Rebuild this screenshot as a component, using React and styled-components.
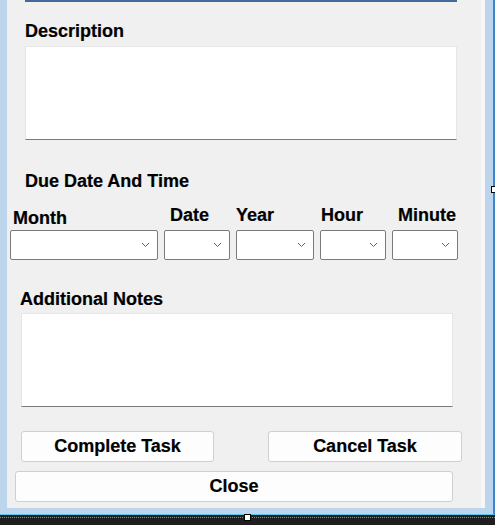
import React from "react";
import styled, { createGlobalStyle } from "styled-components";

const GlobalStyle = createGlobalStyle`
  html, body {
    margin: 0;
    padding: 0;
    background: #1e1e1e;
    font-family: "Liberation Sans", Arial, sans-serif;
  }
`;

const Window = styled.div`
  width: 495px;
  height: 515px;
  box-sizing: border-box;
  background: #bcd4ec;
  padding: 0 8px 6px 7px;
  border-right: 2px solid #3b86cf;
  border-bottom: 1px solid #5cc6ea;
  display: flex;
  position: relative;
`;

const Client = styled.div`
  flex: 1;
  background: #f0f0f0;
  border-right: 4px solid #f6f6f6;
  display: flex;
  flex-direction: column;
`;

const TopLine = styled.div`
  margin-left: 18px;
  width: 432px;
  height: 2px;
  background: #41699a;
`;

const Label = styled.div`
  font-size: 18px;
  line-height: 20px;
  font-weight: bold;
  color: #000;
  margin-left: ${(p) => p.$left || 0}px;
  margin-top: ${(p) => p.$top || 0}px;
  white-space: nowrap;
  -webkit-text-stroke: 0.2px #000;
`;

const TextBox = styled.div`
  margin-left: ${(p) => p.$left}px;
  margin-top: ${(p) => p.$top}px;
  width: 432px;
  height: 94px;
  box-sizing: border-box;
  background: #fff;
  border: 1px solid #e6e6e6;
  border-bottom: 1px solid #7a7a7a;
`;

const DateRow = styled.div`
  display: flex;
  gap: 6px;
  margin-left: 3px;
  margin-top: 14px;
`;

const Field = styled.div`
  display: flex;
  flex-direction: column;
  width: ${(p) => p.$width}px;
`;

const FieldLabel = styled(Label)`
  height: 25px;
  padding-top: ${(p) => p.$drop || 0}px;
  box-sizing: border-box;
`;

const Combo = styled.div`
  height: 30px;
  box-sizing: border-box;
  background: #fff;
  border: 1px solid #7a7a7a;
  border-radius: 2px;
  display: flex;
  align-items: center;
  justify-content: flex-end;
  padding-right: 7px;
`;

const ButtonRow = styled.div`
  display: flex;
  justify-content: space-between;
  width: 441px;
  margin-left: 14px;
  margin-top: 24px;
`;

const Button = styled.div`
  width: ${(p) => p.$width}px;
  height: 31px;
  box-sizing: border-box;
  margin-left: ${(p) => p.$left || 0}px;
  margin-top: ${(p) => p.$top || 0}px;
  background: #fdfdfd;
  border: 1px solid #cfcfcf;
  border-radius: 3px;
  display: flex;
  align-items: center;
  justify-content: center;
  font-size: 18px;
  font-weight: bold;
  color: #000;
  -webkit-text-stroke: 0.2px #000;
`;

const Designer = styled.div`
  height: 10px;
  background: #1e1e1e;
  position: relative;
  &::before {
    content: "";
    position: absolute;
    left: 0;
    right: 0;
    top: 2px;
    border-top: 1px dotted #8a8a8a;
  }
`;

const Handle = styled.div`
  position: absolute;
  width: 5px;
  height: 5px;
  background: #fff;
  border: 1px solid #000;
  left: ${(p) => p.$x}px;
  top: ${(p) => p.$y}px;
`;

function Chevron() {
  return (
    <svg width="9" height="6" viewBox="0 0 9 6">
      <path d="M1 1 L4.5 4.5 L8 1" fill="none" stroke="#606060" strokeWidth="1" />
    </svg>
  );
}

const fields = [
  { name: "Month", width: 148, left: 3, drop: 3 },
  { name: "Date", width: 66, left: 6 },
  { name: "Year", width: 78, left: 0 },
  { name: "Hour", width: 66, left: 1 },
  { name: "Minute", width: 66, left: 6 },
];

export default function App() {
  return (
    <>
      <GlobalStyle />
      <Window>
        <Client>
          <TopLine />
          <Label $left={18} $top={19}>Description</Label>
          <TextBox $left={18} $top={5} />
          <Label $left={18} $top={31}>Due Date And Time</Label>
          <DateRow>
            {fields.map((f) => (
              <Field key={f.name} $width={f.width}>
                <FieldLabel $left={f.left} $drop={f.drop}>
                  {f.name}
                </FieldLabel>
                <Combo>
                  <Chevron />
                </Combo>
              </Field>
            ))}
          </DateRow>
          <Label $left={13} $top={29}>Additional Notes</Label>
          <TextBox $left={14} $top={4} />
          <ButtonRow>
            <Button $width={193}>Complete Task</Button>
            <Button $width={194}>Cancel Task</Button>
          </ButtonRow>
          <Button $width={438} $left={8} $top={9}>Close</Button>
        </Client>
        <Handle $x={491} $y={186} />
      </Window>
      <Designer>
        <Handle $x={244} $y={-1} />
      </Designer>
    </>
  );
}
